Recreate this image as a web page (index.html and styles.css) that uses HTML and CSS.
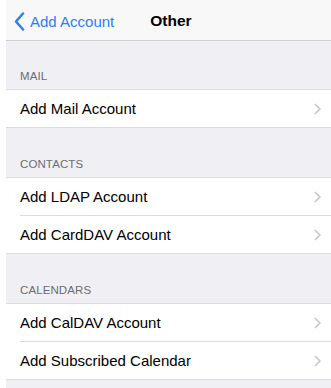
FILE: index.html
```html
<!DOCTYPE html>
<html>
<head>
<meta charset="utf-8">
<link rel="stylesheet" href="styles.css">
</head>
<body>
<div class="screen">
  <div class="navbar">
    <div class="back">
      <svg class="back-icon" width="11" height="19" viewBox="0 0 11 19"><path d="M9 1.5 L2 9.5 L9 17.5" fill="none" stroke="#2f7cf6" stroke-width="2.5" stroke-linecap="round" stroke-linejoin="round"/></svg>
      <span>Add Account</span>
    </div>
    <div class="title">Other</div>
  </div>
  <div class="section-header first">MAIL</div>
  <div class="group">
    <div class="row"><span>Add Mail Account</span><svg class="chev" width="7" height="12" viewBox="0 0 7 12"><path d="M1 1 L6 6 L1 11" fill="none" stroke="#c4c4c8" stroke-width="1.5"/></svg></div>
  </div>
  <div class="section-header">CONTACTS</div>
  <div class="group">
    <div class="row"><span>Add LDAP Account</span><svg class="chev" width="7" height="12" viewBox="0 0 7 12"><path d="M1 1 L6 6 L1 11" fill="none" stroke="#c4c4c8" stroke-width="1.5"/></svg></div>
    <div class="row"><span>Add CardDAV Account</span><svg class="chev" width="7" height="12" viewBox="0 0 7 12"><path d="M1 1 L6 6 L1 11" fill="none" stroke="#c4c4c8" stroke-width="1.5"/></svg></div>
  </div>
  <div class="section-header">CALENDARS</div>
  <div class="group">
    <div class="row"><span>Add CalDAV Account</span><svg class="chev" width="7" height="12" viewBox="0 0 7 12"><path d="M1 1 L6 6 L1 11" fill="none" stroke="#c4c4c8" stroke-width="1.5"/></svg></div>
    <div class="row"><span>Add Subscribed Calendar</span><svg class="chev" width="7" height="12" viewBox="0 0 7 12"><path d="M1 1 L6 6 L1 11" fill="none" stroke="#c4c4c8" stroke-width="1.5"/></svg></div>
  </div>
</div>
</body>
</html>
```
FILE: styles.css
```css
html, body {
  margin: 0;
  padding: 0;
  background: #ffffff;
  height: 388px;
  overflow: hidden;
}
body {
  padding-left: 6px;
  font-family: "Liberation Sans", Arial, sans-serif;
}
.screen {
  background: #efeff4;
  height: 388px;
}
.navbar {
  height: 41px;
  box-sizing: border-box;
  padding-top: 2px;
  background: #f8f8f9;
  border-bottom: 1px solid #cfcfd3;
  display: flex;
  align-items: center;
}
.back {
  display: flex;
  align-items: center;
  gap: 5px;
  padding-left: 8px;
  color: #2f7cf6;
  font-size: 15px;
}
.title {
  margin-left: 36px;
  font-size: 15.5px;
  font-weight: bold;
  color: #000;
}
.section-header {
  height: 49px;
  box-sizing: border-box;
  padding: 30px 0 0 14px;
  font-size: 11.5px;
  color: #6d6d72;
  letter-spacing: 0.1px;
}
.section-header.first {
  height: 48px;
  padding-top: 29px;
}
.group {
  background: #fff;
  border-top: 1px solid #dcdce0;
  border-bottom: 1px solid #dcdce0;
}
.row {
  height: 37px;
  display: flex;
  align-items: center;
  justify-content: space-between;
  margin-left: 14px;
  padding-right: 10px;
  font-size: 15px;
  color: #000;
}
.row + .row {
  border-top: 1px solid #dcdce0;
}
.chev {
  display: block;
}
```
